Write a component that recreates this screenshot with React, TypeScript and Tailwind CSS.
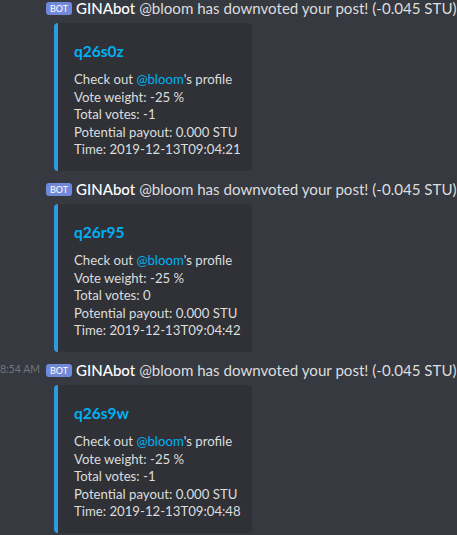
import React from "react";

type Vote = {
  permlink: string;
  total: string;
  time: string;
  stamp?: string;
};

const VOTES: Vote[] = [
  { permlink: "q26s0z", total: "-1", time: "2019-12-13T09:04:21" },
  { permlink: "q26r95", total: "0", time: "2019-12-13T09:04:42" },
  { permlink: "q26s9w", total: "-1", time: "2019-12-13T09:04:48", stamp: "8:54 AM" },
];

const font = { fontFamily: 'Lato, "Noto Sans", sans-serif' };

function Message({ v }: { v: Vote }) {
  return (
    <div className="pb-[8px]">
      <div className="flex h-[20px] items-center whitespace-nowrap">
        <div className="flex w-[42px] shrink-0 justify-end pr-[2px] text-[10.5px] text-[#72767d]">
          {v.stamp ?? ""}
        </div>
        <span className="ml-[4px] flex h-[13px] w-[26px] shrink-0 items-center justify-center rounded-[3px] bg-[#7289da] text-[9px] leading-none text-white">
          BOT
        </span>
        <span className="ml-[4px] text-[15px] font-medium text-white">GINAbot</span>
        <span className="ml-[4px] text-[15.1px] text-[#dcddde]">
          @bloom has downvoted your post! (-0.045 STU)
        </span>
      </div>
      <div className="ml-[54px] mt-[5px] flex h-[148px] w-[198px] rounded-[4px] border-l-4 border-[#2d9be0] bg-[#2f3136]">
        <div className="flex flex-col pl-[16px] pt-[18px]">
          <div className="text-[15.5px] font-bold leading-[20px] text-[#00b0f4]">{v.permlink}</div>
          <div className="mt-[10px] text-[13.2px] leading-[17.5px] text-[#dcddde]">
            <div>
              Check out <span className="text-[#00b0f4]">@bloom</span>'s profile
            </div>
            <div>Vote weight: -25 %</div>
            <div>Total votes: {v.total}</div>
            <div>Potential payout: 0.000 STU</div>
            <div>Time: {v.time}</div>
          </div>
        </div>
      </div>
    </div>
  );
}

export default function App() {
  return (
    <div className="h-[535px] w-[457px] overflow-hidden bg-[#36393f]" style={font}>
      <div className="-mt-[2px]">
        {VOTES.map((v) => (
          <Message key={v.permlink} v={v} />
        ))}
      </div>
    </div>
  );
}
